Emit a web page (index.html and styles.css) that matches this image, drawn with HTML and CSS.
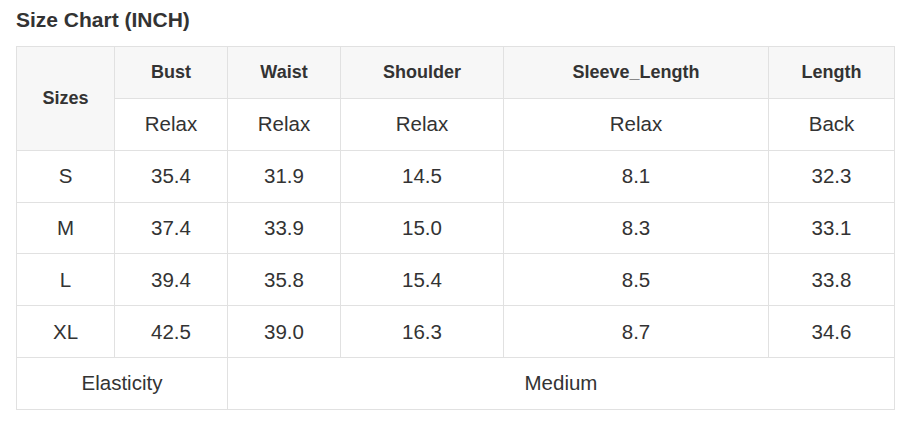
FILE: index.html
```html
<!DOCTYPE html>
<html>
<head>
<meta charset="utf-8">
<link rel="stylesheet" href="styles.css">
</head>
<body>
<div class="page">
  <h2 class="title">Size Chart (INCH)</h2>
  <table class="chart">
    <colgroup>
      <col class="c1"><col class="c2"><col class="c3"><col class="c4"><col class="c5"><col class="c6">
    </colgroup>
    <tr class="head">
      <th rowspan="2" class="sizes">Sizes</th>
      <th>Bust</th><th>Waist</th><th>Shoulder</th><th>Sleeve_Length</th><th>Length</th>
    </tr>
    <tr>
      <td>Relax</td><td>Relax</td><td>Relax</td><td>Relax</td><td>Back</td>
    </tr>
    <tr><td>S</td><td>35.4</td><td>31.9</td><td>14.5</td><td>8.1</td><td>32.3</td></tr>
    <tr><td>M</td><td>37.4</td><td>33.9</td><td>15.0</td><td>8.3</td><td>33.1</td></tr>
    <tr><td>L</td><td>39.4</td><td>35.8</td><td>15.4</td><td>8.5</td><td>33.8</td></tr>
    <tr><td>XL</td><td>42.5</td><td>39.0</td><td>16.3</td><td>8.7</td><td>34.6</td></tr>
    <tr><td colspan="2">Elasticity</td><td colspan="4">Medium</td></tr>
  </table>
</div>
</body>
</html>
```
FILE: styles.css
```css
html, body {
  margin: 0;
  padding: 0;
  background: #fff;
}
.page {
  padding: 8px 16px;
  font-family: "Liberation Sans", Arial, sans-serif;
  color: #333;
}
.title {
  margin: 0 0 14px 0;
  font-size: 21px;
  line-height: 24px;
  font-weight: bold;
  color: #333;
}
.chart {
  border-collapse: collapse;
  table-layout: fixed;
  width: 878px;
}
.c1 { width: 98px; }
.c2 { width: 113px; }
.c3 { width: 113px; }
.c4 { width: 163px; }
.c5 { width: 265px; }
.c6 { width: 126px; }
.chart tr {
  height: 51.85px;
}
.chart th, .chart td {
  border: 1px solid #e1e1e1;
  padding: 0;
  text-align: center;
  vertical-align: middle;
}
.chart th {
  background: #f7f7f7;
  font-weight: bold;
  font-size: 18px;
  color: #333;
}
.chart td {
  font-size: 20.5px;
  color: #333;
}
```
